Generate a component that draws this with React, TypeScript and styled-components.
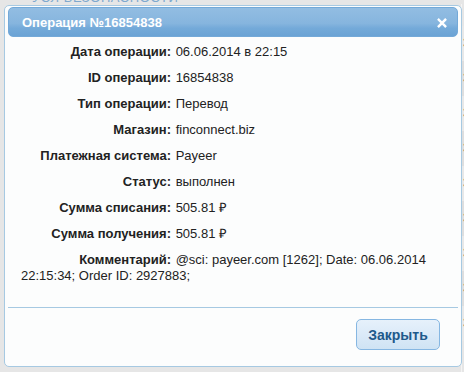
import React from 'react';
import styled, { createGlobalStyle } from 'styled-components';

const GlobalStyle = createGlobalStyle`
  html, body {
    margin: 0;
    padding: 0;
    width: 464px;
    height: 372px;
    overflow: hidden;
    background: #e4e4e4;
    font-family: 'Liberation Sans', Arial, sans-serif;
  }
`;

/* ───────── page behind the dialog ───────── */
const Page = styled.div`
  position: relative;
  width: 464px;
  height: 372px;
  overflow: hidden;
  display: grid;
  grid-template-columns: 461px 1fr;
  grid-template-rows: 4px 1fr;
  background: #e6e6e6;
`;

const PageHeading = styled.div`
  grid-column: 1 / 3;
  padding-left: 32px;
  font-size: 13px;
  line-height: 13px;
  margin-top: -9px;
  color: #7ea9cf;
  letter-spacing: 0.6px;
  white-space: nowrap;
`;

const SideTable = styled.div`
  grid-column: 2;
  border-left: 1px solid #f4f4f4;
  display: flex;
  flex-direction: column;
  padding-top: 22px;
`;

const SideRow = styled.div<{ $odd?: boolean }>`
  height: 35px;
  line-height: 35px;
  padding-left: 1px;
  font-size: 12px;
  color: #6a5a4a;
  background: ${(p) => (p.$odd ? '#dedede' : '#e8e8e8')};
`;

/* ───────── dialog ───────── */
const Dialog = styled.div`
  position: absolute;
  left: 4px;
  top: 5px;
  width: 458px;
  height: 362px;
  box-sizing: border-box;
  padding: 1px 3px 3px;
  border: 1px solid #a6c9e2;
  border-radius: 5px;
  background: #fcfdfd;
  display: flex;
  flex-direction: column;
  color: #222;
`;

const TitleBar = styled.div`
  height: 30px;
  box-sizing: border-box;
  border: 1px solid #74a9d8;
  border-radius: 5px;
  background: linear-gradient(180deg, #92bde2 0%, #86b5de 55%, #74aad9 72%, #6ba3d5 100%);
  display: flex;
  align-items: center;
  justify-content: space-between;
  padding: 0 10px 0 13px;
`;

const Title = styled.span`
  color: #fff;
  font-weight: bold;
  font-size: 13px;
`;

const CloseButton = styled.span`
  display: flex;
  width: 10px;
  height: 10px;
  margin-top: 2px;
  cursor: pointer;
`;

const Content = styled.div`
  flex: 1;
  padding: 7px 13px 0;
  font-size: 13px;
`;

const Row = styled.div`
  line-height: 16px;
  margin-bottom: 10px;
`;

const Label = styled.span`
  display: inline-block;
  width: 150px;
  margin-right: 1px;
  text-align: right;
  font-weight: bold;
`;

const ButtonPane = styled.div`
  border-top: 1px solid #a6c9e2;
  padding: 11px 18px 13px;
  display: flex;
  justify-content: flex-end;
`;

const Button = styled.button`
  width: 84px;
  height: 31px;
  box-sizing: border-box;
  border: 1px solid #86b7e2;
  border-radius: 5px;
  background: linear-gradient(180deg, #e6f1fb 0%, #dbeaf8 50%, #cfe3f4 100%);
  color: #1f5a8b;
  font-family: 'Liberation Sans', Arial, sans-serif;
  font-size: 14px;
  font-weight: bold;
  padding: 0;
  cursor: pointer;
`;

const rows: [string, string][] = [
  ['Дата операции:', '06.06.2014 в 22:15'],
  ['ID операции:', '16854838'],
  ['Тип операции:', 'Перевод'],
  ['Магазин:', 'finconnect.biz'],
  ['Платежная система:', 'Payeer'],
  ['Статус:', 'выполнен'],
  ['Сумма списания:', '505.81 ₽'],
  ['Сумма получения:', '505.81 ₽'],
  ['Комментарий:', '@sci: payeer.com [1262]; Date: 06.06.2014 22:15:34; Order ID: 2927883;'],
];

const App: React.FC = () => {
  return (
    <Page>
      <GlobalStyle />
      <PageHeading>УСЛ БЕЗОПАСНОСТИ</PageHeading>
      <div />
      <SideTable>
        {[0, 1, 2, 3, 4, 5, 6, 7, 8].map((i) => (
          <SideRow key={i} $odd={i % 2 === 1}>
            3
          </SideRow>
        ))}
      </SideTable>

      <Dialog>
        <TitleBar>
          <Title>Операция №16854838</Title>
          <CloseButton>
            <svg width="10" height="10" viewBox="0 0 10 10">
              <path d="M1.8 1.8 L8.2 8.2 M8.2 1.8 L1.8 8.2" stroke="#fff" strokeWidth="2.4" strokeLinecap="square" />
            </svg>
          </CloseButton>
        </TitleBar>
        <Content>
          {rows.map(([label, value]) => (
            <Row key={label}>
              <Label>{label}</Label> {value}
            </Row>
          ))}
        </Content>
        <ButtonPane>
          <Button>Закрыть</Button>
        </ButtonPane>
      </Dialog>
    </Page>
  );
};

export default App;
